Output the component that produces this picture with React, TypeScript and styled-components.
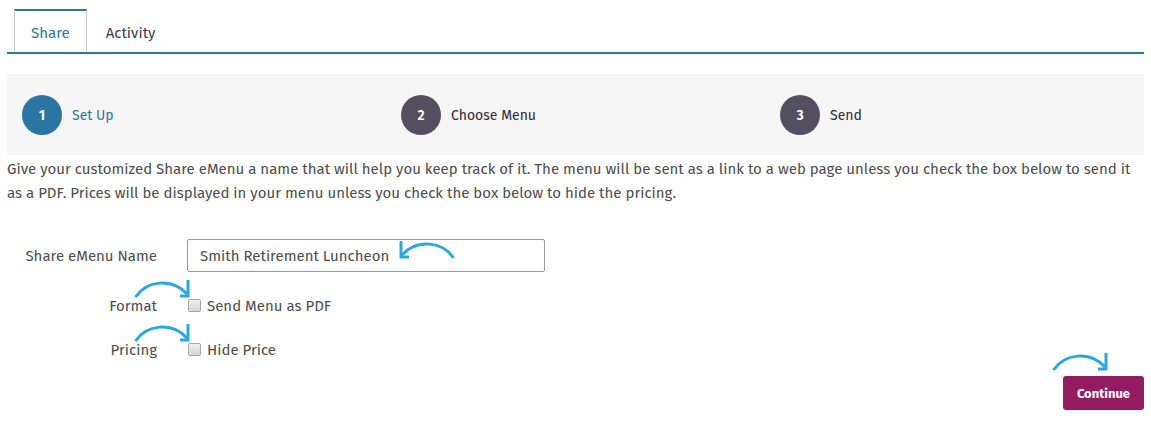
import React from "react";
import styled, { createGlobalStyle } from "styled-components";

const GlobalStyle = createGlobalStyle`
  body {
    margin: 0;
    background: #fff;
    font-family: "Fira Sans", Lato, "Noto Sans", sans-serif;
    color: #4d4d4d;
  }
`;

const Page = styled.div`
  padding: 9px 7px 0 7px;
`;

//tab strip with the blue underline running the full width
const TabBar = styled.div`
  display: flex;
  padding-left: 7px;
  border-bottom: 2px solid #2a75a1;
  height: 43px;
`;

const Tab = styled.div<{ $active?: boolean }>`
  display: flex;
  align-items: center;
  padding: 0 ${(p) => (p.$active ? "16px" : "18px")};
  font-size: 15px;
  color: ${(p) => (p.$active ? "#2a75a1" : "#3f3a4a")};
  background: #fff;
  border-top: 2px solid ${(p) => (p.$active ? "#2a75a1" : "transparent")};
  border-left: 1px solid ${(p) => (p.$active ? "#c8c8c8" : "transparent")};
  border-right: 1px solid ${(p) => (p.$active ? "#c8c8c8" : "transparent")};
  margin-bottom: -2px;
  height: 43px;
  box-sizing: border-box;
  padding-top: 2px;
`;

const Steps = styled.div`
  margin-top: 20px;
  height: 81px;
  background: #f6f6f6;
  display: grid;
  grid-template-columns: repeat(3, 1fr);
  align-items: center;
`;

const Step = styled.div`
  display: flex;
  align-items: center;
  gap: 10px;
  padding-left: 15px;
  padding-top: 1px;
`;

const StepNum = styled.div<{ $active?: boolean }>`
  width: 40px;
  height: 40px;
  border-radius: 50%;
  background: ${(p) => (p.$active ? "#2a75a1" : "#534e60")};
  color: #fff;
  font-size: 14px;
  font-weight: 600;
  display: flex;
  align-items: center;
  justify-content: center;
`;

const StepLabel = styled.span<{ $active?: boolean }>`
  font-size: 14px;
  color: ${(p) => (p.$active ? "#2a75a1" : "#2e2a36")};
`;

const Intro = styled.p`
  margin: 2px 0 0 0;
  font-size: 15px;
  line-height: 24px;
  color: #4d4d4d;
`;

const Form = styled.div`
  margin-top: 34px;
  display: flex;
  flex-direction: column;
`;

const Row = styled.div<{ $gap?: number }>`
  display: grid;
  grid-template-columns: 150px 1fr;
  column-gap: 30px;
  align-items: center;
  height: 33px;
  margin-top: ${(p) => p.$gap ?? 0}px;
`;

const Label = styled.label`
  text-align: right;
  font-size: 15px;
  color: #4d4d4d;
`;

const Control = styled.div`
  position: relative;
  display: flex;
  align-items: center;
  height: 33px;
`;

const TextInput = styled.input`
  width: 358px;
  height: 33px;
  box-sizing: border-box;
  border: 1px solid #999;
  border-radius: 2px;
  padding: 0 12px;
  font-family: inherit;
  font-size: 15px;
  color: #4d4d4d;
  outline: none;
`;

const Check = styled.input`
  appearance: none;
  width: 13px;
  height: 13px;
  margin: 0 6px 0 1px;
  border: 1px solid #a6a6a6;
  border-radius: 2px;
  background: linear-gradient(#f0f0f0, #d4d4d4);
  box-sizing: border-box;
`;

const CheckText = styled.span`
  font-size: 15px;
  color: #4d4d4d;
`;

const Footer = styled.div`
  display: flex;
  justify-content: flex-end;
  margin-top: 10px;
`;

const ButtonWrap = styled.div`
  position: relative;
`;

const ContinueButton = styled.button`
  height: 34px;
  padding: 0 14px;
  background: #931b61;
  color: #fff;
  border: none;
  border-radius: 3px;
  font-family: inherit;
  font-size: 13px;
  font-weight: 700;
`;

const ArrowSvg = styled.svg<{ $left: number; $top: number }>`
  position: absolute;
  left: ${(p) => p.$left}px;
  top: ${(p) => p.$top}px;
  overflow: visible;
  pointer-events: none;
`;

// curved pointer arrow, head on the right unless flipped
const Arrow = ({ left, top, flip }: { left: number; top: number; flip?: boolean }) => (
  <ArrowSvg $left={left} $top={top} width="56" height="19" viewBox="0 0 56 19">
    <g
      fill="none"
      stroke="#29a8e0"
      strokeWidth="3"
      transform={flip ? "translate(56 0) scale(-1 1)" : undefined}
    >
      <path d="M1.5 18 C 12 2, 38 -2, 53 15" />
      <path d="M54 1 L54 17 L46 17" />
    </g>
  </ArrowSvg>
);

export default function App() {
  return (
    <Page>
      <GlobalStyle />
      <TabBar>
        <Tab $active>Share</Tab>
        <Tab>Activity</Tab>
      </TabBar>
      <Steps>
        <Step>
          <StepNum $active>1</StepNum>
          <StepLabel $active>Set Up</StepLabel>
        </Step>
        <Step>
          <StepNum>2</StepNum>
          <StepLabel>Choose Menu</StepLabel>
        </Step>
        <Step>
          <StepNum>3</StepNum>
          <StepLabel>Send</StepLabel>
        </Step>
      </Steps>
      <Intro>
        Give your customized Share eMenu a name that will help you keep track of it. The menu will be
        sent as a link to a web page unless you check the box below to send it as a PDF. Prices will be
        displayed in your menu unless you check the box below to hide the pricing.
      </Intro>
      <Form>
        <Row>
          <Label>Share eMenu Name</Label>
          <Control>
            <TextInput defaultValue="Smith Retirement Luncheon" />
            <Arrow left={212} top={1} flip />
          </Control>
        </Row>
        <Row $gap={17}>
          <Label>Format</Label>
          <Control>
            <Check type="checkbox" />
            <CheckText>Send Menu as PDF</CheckText>
            <Arrow left={-53} top={-10} />
          </Control>
        </Row>
        <Row $gap={11}>
          <Label>Pricing</Label>
          <Control>
            <Check type="checkbox" />
            <CheckText>Hide Price</CheckText>
            <Arrow left={-53} top={-10} />
          </Control>
        </Row>
      </Form>
      <Footer>
        <ButtonWrap>
          <ContinueButton>Continue</ContinueButton>
          <Arrow left={-11} top={-24} />
        </ButtonWrap>
      </Footer>
    </Page>
  );
}
